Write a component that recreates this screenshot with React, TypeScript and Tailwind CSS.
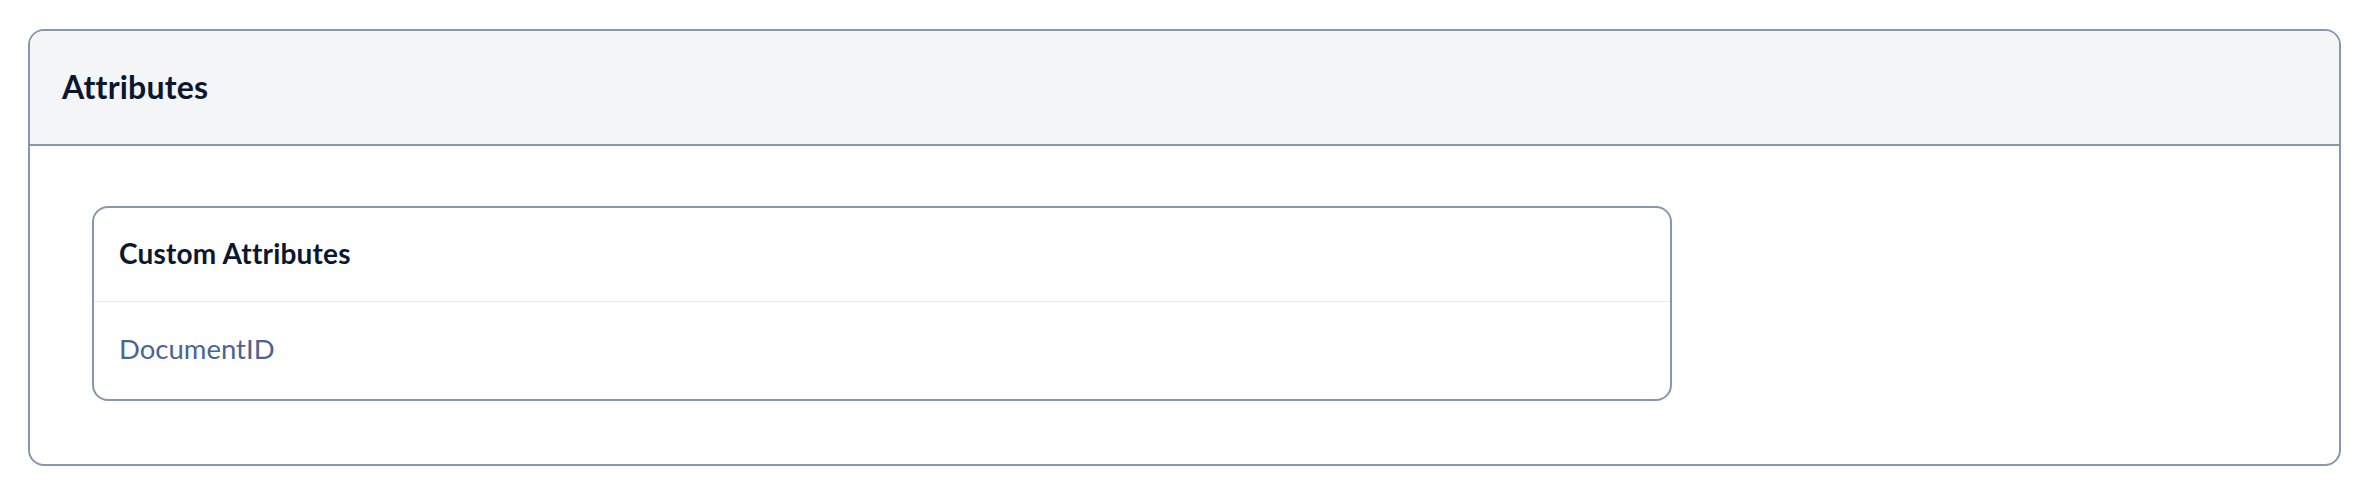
export default function App() {
  return (
    <div className="w-full h-[496px] bg-white pt-[29px] pl-[28px] pr-[37px]" style={{ fontFamily: "Lato, 'Noto Sans', sans-serif" }}>
      <div className="h-[437px] rounded-[16px] border-2 border-[#8797b0] overflow-hidden flex flex-col">
        <div className="h-[115px] shrink-0 bg-[#f4f5f7] border-b-2 border-[#8797b0] flex items-center pl-[32px] pb-[2px]">
          <h2 className="text-[32px] font-bold text-[#0b1730] tracking-[0.2px] leading-none">Attributes</h2>
        </div>
        <div className="flex-1 pt-[60px] pl-[62px]">
          <div className="w-[1580px] h-[195px] rounded-[16px] border-2 border-[#8797b0] flex flex-col overflow-hidden">
            <div className="h-[94px] flex items-center pl-[25px] pb-[3px] border-b-[1.5px] border-[#e9ecf1]">
              <h3 className="text-[28px] font-bold text-[#0b1730] tracking-[0.2px] leading-none">Custom Attributes</h3>
            </div>
            <div className="flex-1 flex items-center pl-[25px] pb-[3px]">
              <span className="text-[27.5px] text-[#4b6490] leading-none">DocumentID</span>
            </div>
          </div>
        </div>
      </div>
    </div>
  );
}
